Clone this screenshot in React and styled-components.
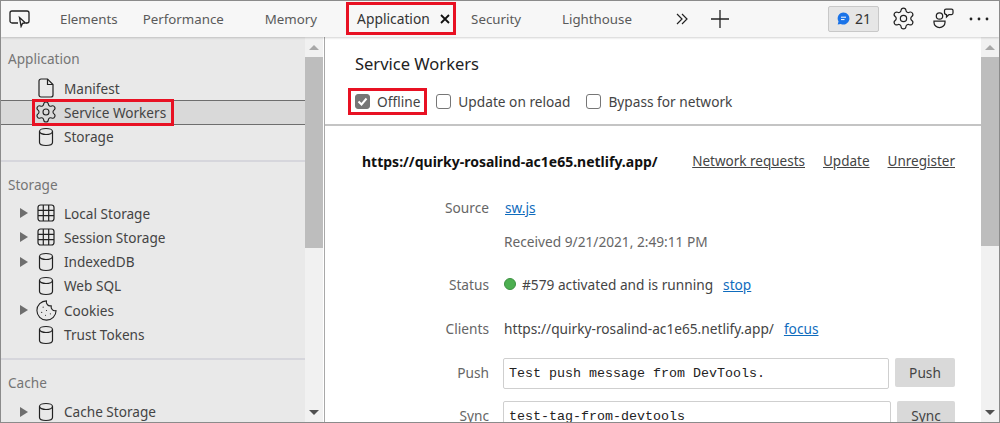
import React from 'react';
import styled, { createGlobalStyle } from 'styled-components';
import { Settings, Cookie } from 'lucide-react';

const Global = createGlobalStyle`
  html, body { margin: 0; padding: 0; background: #fff; }
  #root { width: 1000px; height: 423px; }
  * { box-sizing: border-box; }
`;
const FONT = `"Noto Sans", "Open Sans", Arial, sans-serif`;

const Frame = styled.div`
  width: 1000px; height: 423px; overflow: hidden; display: flex; flex-direction: column;
  border: 1px solid #8b8b8b;
  font-family: ${FONT}; font-size: 13.6px; color: #333; background: #fff;
`;
const Toolbar = styled.div`
  height: 36px; flex: none; display: flex; align-items: center; background: #f7f7f7;
  box-shadow: 0 1px 2px rgba(0,0,0,.18); position: relative; z-index: 2; padding: 0 0 1px 8px;
`;
const Tab = styled.div`
  margin-left: ${p => p.$ml}px; color: #5a5a5a; font-size: 13.3px; white-space: nowrap; flex: none;
`;
const ActiveTab = styled.div`
  margin-left: 29px; height: 33px; width: 110px; flex: none;
  border: 3px solid #e81123; display: flex; align-items: center; padding-left: 8px;
  color: #333; font-size: 13.8px; gap: 10px;
`;
const ToolIcon = styled.svg`
  margin-left: ${p => p.$ml || 0}px; flex: none; display: block;
`;
const Badge = styled.div`
  margin-left: 99px; width: 51px; height: 26px; flex: none; background: #e6e6e6; border: 1px solid #c8c8c8;
  border-radius: 2px; display: flex; align-items: center; padding-left: 8px; gap: 5px; color: #333; font-size: 14px;
`;
const Body = styled.div`flex: 1; display: flex; min-height: 0;`;
const Sidebar = styled.div`
  width: 324px; flex: none; display: flex; border-right: 1px solid #a8a8a8; padding-right: 1px; background: #fff;
`;
const SideList = styled.div`
  width: 304px; flex: none; background: #e9e9e9; overflow: hidden; padding-top: 10px;
`;
const Scrollbar = styled.div`
  width: ${p => p.$w}px; flex: none; background: #f1f1f1; display: flex; flex-direction: column; align-items: center;
`;
const Arrow = styled.div`
  height: 20px; flex: none; width: 100%; display: flex; align-items: center; justify-content: center;
  &::after {
    content: ''; border-left: 5px solid transparent; border-right: 5px solid transparent;
    ${p => p.$down ? 'border-top: 5px solid #505050;' : 'border-bottom: 5px solid #a8a8a8;'}
  }
`;
const Thumb = styled.div`width: 100%; height: ${p => p.$h}px; flex: none; background: #bdbdbd;`;
const Grow = styled.div`flex: 1;`;
const SectionTitle = styled.div`
  height: 24px; line-height: 24px; padding-left: 7px; margin-bottom: ${p => p.$mb}px; color: #757575; font-size: 13.6px;
`;
const Group = styled.div`
  border-bottom: ${p => p.$last ? 'none' : '2px solid #d6d6dc'};
  padding-bottom: ${p => p.$pb}px; margin-bottom: ${p => p.$last ? 0 : 11}px;
`;
const Item = styled.div`
  height: 24.3px; display: flex; align-items: center; position: relative; color: #444;
  ${p => p.$selected && 'background: #d9d9d9; border-top: 1px solid #6e6e6e; border-bottom: 1px solid #6e6e6e;'}
`;
const Caret = styled.span`
  width: 0; height: 0; margin-left: 19px; flex: none;
  border-top: 5.5px solid transparent; border-bottom: 5.5px solid transparent; border-left: 8px solid ${p => p.$hide ? 'transparent' : '#6e6e6e'};
`;
const ItemIcon = styled.span`
  width: 20px; height: 20px; margin-left: 8px; margin-right: 8px; flex: none; display: flex; align-items: center; justify-content: center; color: #222;
  svg { flex: none; }
`;
const ItemLabel = styled.span`white-space: nowrap;`;
const RedBox = styled.div`
  position: absolute; left: 31px; top: -2px; width: 142px; height: 27px; border: 3px solid #e81123; pointer-events: none;
`;
const Main = styled.div`flex: 1; display: flex; min-width: 0;`;
const Content = styled.div`flex: 1; min-width: 0; overflow: hidden; font-size: 13.7px;`;
const Head = styled.div`
  height: 89px; border-bottom: 2px solid #c4c4c4; padding: 14px 0 0 30px;
`;
const Title = styled.div`font-size: 16.5px; line-height: 25px; color: #222;`;
const Checks = styled.div`display: flex; align-items: center; margin-top: 13px; height: 24px; margin-left: -7px;`;
const CheckGroup = styled.label`
  display: flex; align-items: center; gap: 7px; color: #444; white-space: nowrap; height: ${p => p.$red ? '27px' : 'auto'};
  margin-left: ${p => p.$ml || 0}px; padding: ${p => p.$red ? '0 4px 0 4px' : '0'};
  ${p => p.$red && 'border: 3px solid #e81123;'}
`;
const Box = styled.span`
  width: 15px; height: 15px; border: 1px solid #767676; border-radius: 3px; flex: none; background: ${p => p.$on ? '#767676' : '#fff'};
  display: flex; align-items: center; justify-content: center;
`;
const Worker = styled.div`padding: 23px 26px 0 37px; width: 100%;`;
const UrlRow = styled.div`display: flex; align-items: center; height: 24px; justify-content: space-between; margin-bottom: 22px;`;
const Url = styled.div`font-weight: 700; color: #111; font-size: 14px; white-space: nowrap;`;
const Actions = styled.div`display: flex; gap: 18px; font-size: 13.5px;`;
const ActLink = styled.span`color: #444; text-decoration: underline; white-space: nowrap;`;
const Row = styled.div`
  display: grid; grid-template-columns: 127px 1fr; column-gap: 15px; align-items: ${p => p.$top ? 'start' : 'center'};
  min-height: 24px; margin-bottom: ${p => p.$mb}px;
`;
const Label = styled.div`text-align: right; color: #666;`;
const FieldLabel = styled(Label)`line-height: 29px;`;
const Value = styled.div`display: flex; align-items: center; white-space: nowrap; color: #444;`;
const Muted = styled.span`color: #666;`;
const Anchor = styled.a`color: #0f6cbd; text-decoration: underline; margin-left: ${p => p.$ml || 0}px;`;
const Dot = styled.span`width: 12px; height: 12px; border-radius: 50%; background: #4caf50; border: 1px solid #3d9142; margin-right: 6px; flex: none;`;
const InputRow = styled.div`display: flex; justify-content: space-between; align-items: flex-start; margin-left: -1px;`;
const TextBox = styled.div`
  width: ${p => p.$w}px; height: 31px; border: 1px solid #cfcfcf; border-radius: 2px; background: #fff;
  font-family: "Liberation Mono", monospace; font-size: 13.33px; color: #222; display: flex; align-items: center; padding-left: 5px; white-space: pre;
`;
const Btn = styled.div`
  width: ${p => p.$w}px; height: 29px; background: #d9d9d9; border-radius: 2px; display: flex; align-items: center; justify-content: center; color: #444;
`;

const Cyl = () => (
  <svg width="16" height="20" viewBox="0 0 16 20" fill="none" stroke="#222" strokeWidth="1.2">
    <path d="M1.5 4.5v11c0 1.8 3 3 6.5 3s6.5-1.2 6.5-3v-11" />
    <ellipse cx="8" cy="4.5" rx="6.5" ry="3" />
  </svg>
);
const Grid = () => (
  <svg width="18" height="18" viewBox="0 0 18 18" fill="none" stroke="#222" strokeWidth="1.2">
    <rect x="1" y="1" width="16" height="16" rx="2.5" />
    <path d="M1 6.3h16M1 11.7h16M6.3 1v16M11.7 1v16" />
  </svg>
);
const Doc = () => (
  <svg width="16" height="20" viewBox="0 0 16 20" fill="none" stroke="#222" strokeWidth="1.2">
    <path d="M3 1h6.5L15 6.5V17a2 2 0 0 1-2 2H3a2 2 0 0 1-2-2V3a2 2 0 0 1 2-2z" />
    <path d="M9.5 1v5.5H15" />
  </svg>
);

const storageItems = [
  ['Local Storage', <Grid />, true],
  ['Session Storage', <Grid />, true],
  ['IndexedDB', <Cyl />, true],
  ['Web SQL', <Cyl />, false],
  ['Cookies', <Cookie size={23} strokeWidth={1.15} />, true],
  ['Trust Tokens', <Cyl />, false],
];

export default function App() {
  return (
    <Frame>
      <Global />
      <Toolbar>
        <ToolIcon width="21" height="18" viewBox="0 0 21 18" fill="none" stroke="#222" strokeWidth="1.3">
          <path d="M9 13H3a2 2 0 0 1-2-2V3a2 2 0 0 1 2-2h15a2 2 0 0 1 2 2v8a2 2 0 0 1-2 2h-1" />
          <path d="M10.5 7.5l6 5.5-3 .4-1.4 3z" fill="#f7f7f7" />
        </ToolIcon>
        <Tab $ml={30}>Elements</Tab>
        <Tab $ml={25}>Performance</Tab>
        <Tab $ml={41}>Memory</Tab>
        <ActiveTab>
          Application
          <svg width="10" height="10" viewBox="0 0 10 10" stroke="#111" strokeWidth="1.8"><path d="M1 1l8 8M9 1l-8 8" /></svg>
        </ActiveTab>
        <Tab $ml={15}>Security</Tab>
        <Tab $ml={41}>Lighthouse</Tab>
        <ToolIcon $ml={44} width="12" height="12" viewBox="0 0 12 12" fill="none" stroke="#222" strokeWidth="1.2"><path d="M1 1l5 5-5 5M6 1l5 5-5 5" /></ToolIcon>
        <ToolIcon $ml={23} width="18" height="18" viewBox="0 0 18 18" stroke="#222" strokeWidth="1.3"><path d="M9 0v18M0 9h18" /></ToolIcon>
        <Badge>
          <svg width="13" height="13" viewBox="0 0 13 13"><path d="M6.5.5a6 6 0 1 1-2.7 11.4L.7 12.6l.8-3A6 6 0 0 1 6.5.5z" fill="#1a73e8" /><path d="M4 5.2h5M4 7.6h3.5" stroke="#fff" strokeWidth="1" /></svg>
          21
        </Badge>
        <ToolIcon as={Settings} $ml={12} size={25} strokeWidth={1.15} color="#222" />
        <ToolIcon $ml={17} width="21" height="21" viewBox="0 0 21 21" fill="none" stroke="#222" strokeWidth="1.25">
          <circle cx="6.5" cy="8" r="3.2" />
          <path d="M1 13h11v1.5a5.5 5 0 0 1-11 0z" />
          <path d="M11.5 2.5a1.5 1.5 0 0 1 1.5-1.5h5.5a1.5 1.5 0 0 1 1.5 1.5V5a1.5 1.5 0 0 1-1.5 1.5h-2.5L13.5 9V6.5a2 2 0 0 1-2-2z" />
        </ToolIcon>
        <ToolIcon $ml={15} width="20" height="4" viewBox="0 0 20 4" fill="#222"><circle cx="2" cy="2" r="1.4" /><circle cx="10" cy="2" r="1.4" /><circle cx="18" cy="2" r="1.4" /></ToolIcon>
      </Toolbar>
      <Body>
        <Sidebar>
          <SideList>
            <Group $pb={11}>
              <SectionTitle $mb={5}>Application</SectionTitle>
              <Item><Caret $hide /><ItemIcon><Doc /></ItemIcon><ItemLabel>Manifest</ItemLabel></Item>
              <Item $selected>
                <Caret $hide /><ItemIcon><Settings size={24} strokeWidth={1.1} /></ItemIcon><ItemLabel>Service Workers</ItemLabel>
                <RedBox />
              </Item>
              <Item><Caret $hide /><ItemIcon><Cyl /></ItemIcon><ItemLabel>Storage</ItemLabel></Item>
            </Group>
            <Group $pb={11}>
              <SectionTitle $mb={4}>Storage</SectionTitle>
              {storageItems.map(([name, icon, caret]) => (
                <Item key={name}><Caret $hide={!caret} /><ItemIcon>{icon}</ItemIcon><ItemLabel>{name}</ItemLabel></Item>
              ))}
            </Group>
            <Group $last $pb={0}>
              <SectionTitle $mb={5}>Cache</SectionTitle>
              <Item><Caret /><ItemIcon><Cyl /></ItemIcon><ItemLabel>Cache Storage</ItemLabel></Item>
            </Group>
          </SideList>
          <Scrollbar $w={18}>
            <Arrow />
            <Thumb $h={191} />
            <Grow />
            <Arrow $down />
          </Scrollbar>
        </Sidebar>
        <Main>
          <Content>
            <Head>
              <Title>Service Workers</Title>
              <Checks>
                <CheckGroup $red>
                  <Box $on>
                    <svg width="11" height="11" viewBox="0 0 11 11" fill="none" stroke="#fff" strokeWidth="2"><path d="M1.5 5.5l3 3 5-6" /></svg>
                  </Box>
                  Offline
                </CheckGroup>
                <CheckGroup $ml={9}><Box />Update on reload</CheckGroup>
                <CheckGroup $ml={16}><Box />Bypass for network</CheckGroup>
              </Checks>
            </Head>
            <Worker>
              <UrlRow>
                <Url>https://quirky-rosalind-ac1e65.netlify.app/</Url>
                <Actions>
                  <ActLink>Network requests</ActLink>
                  <ActLink>Update</ActLink>
                  <ActLink>Unregister</ActLink>
                </Actions>
              </UrlRow>
              <Row $mb={10}><Label>Source</Label><Value><Anchor $ml={1}>sw.js</Anchor></Value></Row>
              <Row $mb={19}><Label /><Value><Muted>Received 9/21/2021, 2:49:11 PM</Muted></Value></Row>
              <Row $mb={20}><Label>Status</Label><Value><Dot />#579 activated and is running<Anchor $ml={10}>stop</Anchor></Value></Row>
              <Row $mb={18}><Label>Clients</Label><Value>https://quirky-rosalind-ac1e65.netlify.app/<Anchor $ml={10}>focus</Anchor></Value></Row>
              <Row $mb={12} $top>
                <FieldLabel>Push</FieldLabel>
                <InputRow><TextBox $w={386}>Test push message from DevTools.</TextBox><Btn $w={60}>Push</Btn></InputRow>
              </Row>
              <Row $mb={0} $top>
                <FieldLabel>Sync</FieldLabel>
                <InputRow><TextBox $w={388}>test-tag-from-devtools</TextBox><Btn $w={58}>Sync</Btn></InputRow>
              </Row>
            </Worker>
          </Content>
          <Scrollbar $w={18}>
            <Arrow />
            <Thumb $h={189} />
            <Grow />
            <Arrow $down />
          </Scrollbar>
        </Main>
      </Body>
    </Frame>
  );
}
